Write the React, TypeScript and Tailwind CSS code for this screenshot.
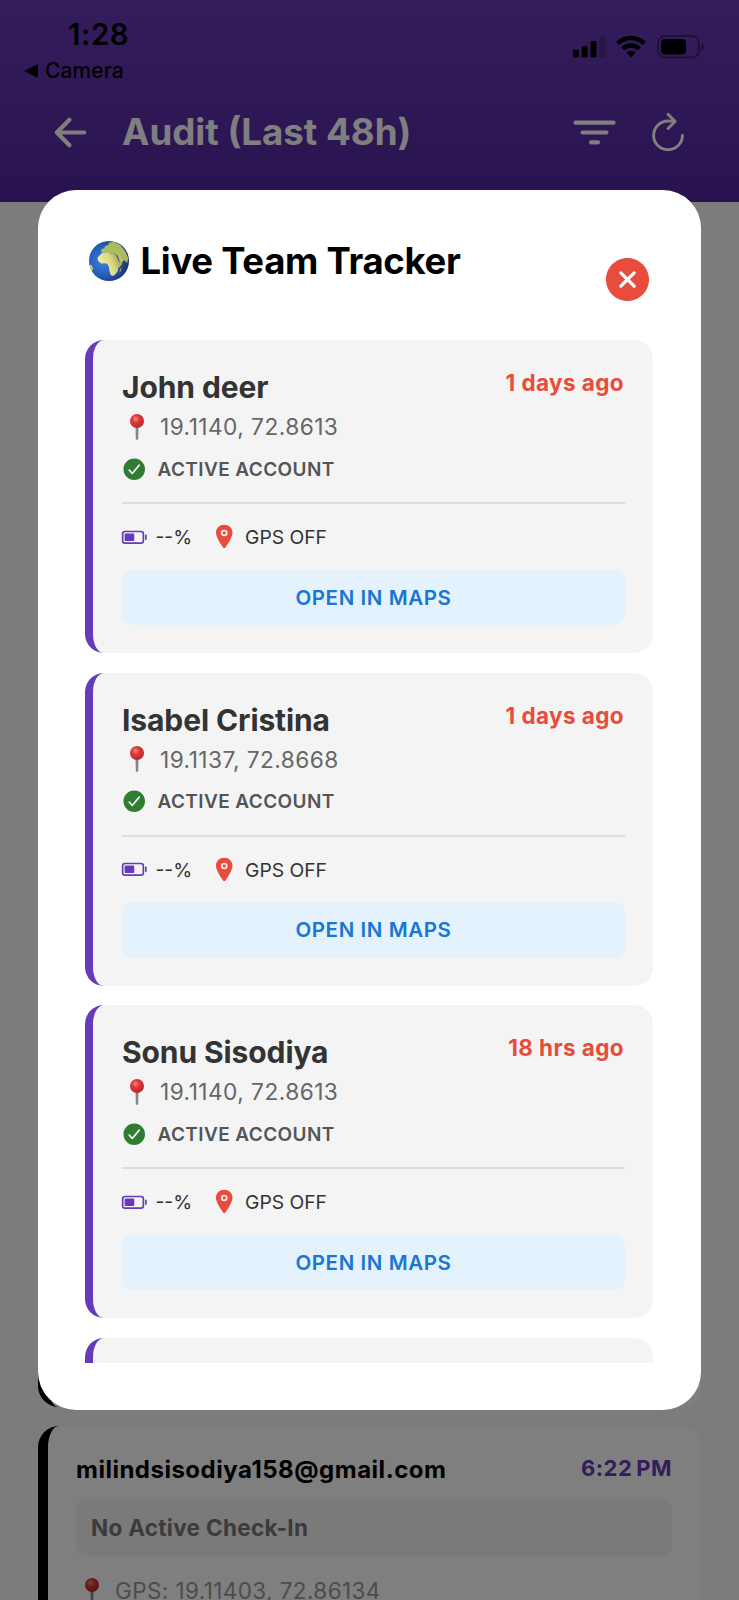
import {
  IoArrowBack,
  IoBatteryHalf,
  IoCheckmarkCircle,
  IoCloseCircle,
  IoFilter,
  IoLocation,
  IoRefreshOutline,
} from "react-icons/io5";

const MEMBERS = [
  { name: "John deer", seen: "1 days ago", coords: "19.1140, 72.8613" },
  { name: "Isabel Cristina", seen: "1 days ago", coords: "19.1137, 72.8668" },
  { name: "Sonu Sisodiya", seen: "18 hrs ago", coords: "19.1140, 72.8613" },
];

function Globe() {
  return (
    <svg viewBox="0 0 40 40" className="w-10 h-10 shrink-0">
      <defs>
        <radialGradient id="ocean" cx="0.35" cy="0.5" r="0.66">
          <stop offset="0" stopColor="#3a83e0" />
          <stop offset="0.6" stopColor="#2459b8" />
          <stop offset="1" stopColor="#1a2d5c" />
        </radialGradient>
        <linearGradient id="land" x1="0.2" y1="0.6" x2="1" y2="0.3">
          <stop offset="0" stopColor="#f0e9a8" />
          <stop offset="0.5" stopColor="#d9d680" />
          <stop offset="1" stopColor="#8f9440" />
        </linearGradient>
        <clipPath id="disc">
          <circle cx="20" cy="20" r="20" />
        </clipPath>
      </defs>
      <circle cx="20" cy="20" r="20" fill="url(#ocean)" />
      <g clipPath="url(#disc)">
        {/* Europe and Asia */}
        <path
          d="M12 10.5l.6-2.6 2.6-.6 1-2.4 3-1 1-2.4 5-.6 6 3 5 6 3 7-1 5-2.4-2-2-4-2.4-1.6-2 .4-3-1.4-3 .8-1.6-1.6-2 .6-1.6-2-2.4.4-1.6.8z"
          fill="#a9bd5c"
        />
        <path d="M28.5 13.6l3.4.4 3.4 4.6-2.4 3-1.8.4z" fill="#c2bd68" />
        {/* Africa */}
        <path
          d="M12.4 12.6l3.6-1.2 3.6-.2.8 1.6 3 .8 3.6.2 1.4 3.4 2 4 3.2.2-1 2.6-3.4 3.2-.4 3-2.6 3.4-2.6 1.4-2-1.2-1.4-4.8-.4-3.2-1.6-3-2.6-.6-3.6.2-3-2.6-.4-3.2z"
          fill="url(#land)"
        />
        <path d="M0 23.5l2.6.6 1.6 3.6-1.6 3.6-2.6-2z" fill="#c9c56a" />
        <path d="M31.2 27.6l1-.8-.4 3.6-1.4 1z" fill="#a9a850" />
      </g>
    </svg>
  );
}

function PushPin({ className }: { className?: string }) {
  return (
    <svg viewBox="0 0 14 26" className={className}>
      <defs>
        <radialGradient id="pinhead" cx="0.4" cy="0.35" r="0.65">
          <stop offset="0" stopColor="#f58a84" />
          <stop offset="0.4" stopColor="#dd3a38" />
          <stop offset="1" stopColor="#b8282a" />
        </radialGradient>
      </defs>
      <path d="M5.5 12h3l-.3 13.2q-1.2 1-2.4 0z" fill="#858588" />
      <circle cx="7" cy="7" r="7" fill="url(#pinhead)" />
    </svg>
  );
}

function StatusIcons() {
  return (
    <svg viewBox="0 0 132 24" className="w-[132px] h-6">
      <rect x="0" y="14.5" width="6" height="8" rx="1.5" />
      <rect x="8.7" y="11" width="6" height="11.5" rx="1.5" />
      <rect x="17.5" y="6" width="6" height="16.5" rx="1.5" />
      <rect x="26.3" y="1" width="6" height="21.5" rx="1.5" opacity="0.2" />
      <g fill="none" stroke="#000" strokeWidth="4.4">
        <path d="M44.7 8.4a19 19 0 0 1 26.6 0" />
        <path d="M49.7 13.8a12 12 0 0 1 16.6 0" />
      </g>
      <path d="M58 22.2l-4.6-4.6a6.6 6.6 0 0 1 9.2 0z" />
      <rect x="85" y="1" width="41" height="21.5" rx="7" fill="none" stroke="#000" strokeWidth="1.8" opacity="0.4" />
      <rect x="88" y="4" width="25" height="15.5" rx="4" />
      <path d="M128.5 8q2.6 1 2.6 3.7t-2.6 3.7z" opacity="0.4" />
    </svg>
  );
}

function MemberCard({ name, seen, coords }: { name: string; seen: string; coords: string }) {
  return (
    <div className="h-[313px] shrink-0 rounded-[19px] border-l-8 border-[#673ab7] bg-[#f4f4f4] pt-7 pl-[29px] pr-7">
      <div className="flex h-[38px] justify-between">
        <h3 className="text-[30px] leading-[38px] font-bold tracking-[-0.1px] text-[#333]">{name}</h3>
        <span className="text-[22.5px] leading-[29px] mr-px font-bold tracking-[0.4px] text-[#e74c3c]">{seen}</span>
      </div>
      <div className="flex h-[41px] items-center">
        <PushPin className="ml-2 w-[14px] h-[26px]" />
        <span className="mt-[2px] ml-4 text-[22.7px] tracking-[0.45px] text-[#666]">{coords}</span>
      </div>
      <div className="flex h-11 items-center">
        <IoCheckmarkCircle className="-ml-px size-[26.5px] text-[#2e7d32]" />
        <span className="mt-[2px] ml-[10px] text-[19px] font-semibold tracking-[0.4px] text-[#555]">ACTIVE ACCOUNT</span>
      </div>
      <div className="mt-[11px] border-t-2 border-[#ddd]" />
      <div className="flex h-[65.5px] items-center text-[19.3px] text-[#333]">
        <IoBatteryHalf className="-ml-px size-[26.5px] text-[#673ab7]" />
        <span className="mt-[2px] ml-2 w-[55px]">--%</span>
        <IoLocation className="-mt-px size-[26.5px] text-[#e74c3c]" />
        <span className="mt-[2px] ml-2">GPS OFF</span>
      </div>
      <button className="block h-[55.5px] w-full rounded-[10px] bg-[#e3f2fd] pt-[2px] text-[20.5px] font-semibold tracking-[0.6px] text-[#1976d2]">
        OPEN IN MAPS
      </button>
    </div>
  );
}

export default function App() {
  return (
    <div className="relative flex h-[1600px] w-[739px] flex-col overflow-hidden bg-[#f6f8fc] font-[Inter,sans-serif]">
      {/* Header */}
      <header className="h-[202px] shrink-0 bg-linear-to-b from-[#6a3ab8] to-[#5026a0]">
        <div className="flex h-[98px] justify-between pr-[34px] pl-6">
          <div className="text-black">
            <p className="mt-4 ml-[44px] text-[29.5px] leading-[36px] font-semibold tracking-[0.5px]">1:28</p>
            <div className="-mt-px flex h-10 items-center gap-[7px]">
              <svg viewBox="0 0 14 14" className="size-[14px]">
                <path d="M0 7L13 0.5Q14 0.5 14 1.5V12.5Q14 13.5 13 13.5Z" />
              </svg>
              <span className="text-[21px] font-medium tracking-[0.1px]">Camera</span>
            </div>
          </div>
          <div className="mt-[35px]">
            <StatusIcons />
          </div>
        </div>
        <div className="flex h-[68px] items-center pl-12 text-white">
          <IoArrowBack className="size-[45px]" />
          <h1 className="ml-[29px] w-[450px] text-[36.7px] font-bold">Audit (Last 48h)</h1>
          <IoFilter className="size-[45px]" />
          <IoRefreshOutline className="ml-7 size-[46px]" />
        </div>
      </header>

      {/* Audit log */}
      <main className="flex flex-1 flex-col gap-[19px] px-[38px] pt-10">
        <div className="h-[1165px] shrink-0 rounded-[21px] border-l-[10px] border-black bg-white" />
        <div className="h-[320px] shrink-0 rounded-[21px] border-l-[10px] border-black bg-white pt-[27px] pr-[29px] pl-7">
          <div className="flex h-[46px] justify-between">
            <span className="text-[24px] leading-[34px] font-bold tracking-[0.5px] text-black">milindsisodiya158@gmail.com</span>
            <span className="text-[22px] leading-[31px] font-bold tracking-[0.5px] text-[#673ab7]">{"6:22\u202fPM"}</span>
          </div>
          <div className="flex h-[57px] items-center rounded-[10px] bg-[#f4f4f4] pt-px pl-[15px] text-[22.5px] font-bold tracking-[0.3px] text-[#777]">
            No Active Check-In
          </div>
          <div className="mt-[15px] flex h-10 items-center">
            <PushPin className="ml-[9px] w-[14px] h-[26px]" />
            <span className="ml-4 text-[22.5px] leading-[18px] tracking-[0.4px] text-[#999]">GPS: 19.11403, 72.86134</span>
          </div>
        </div>
      </main>

      {/* Tracker modal */}
      <div className="absolute inset-0 bg-black/50 px-[38px] pt-[190px]">
        <section className="h-[1220px] rounded-[38px] bg-white pt-[47px] pr-12 pl-[47px]">
          <div className="flex h-[103px] items-start justify-between">
            <div className="flex h-12 items-center">
              <span className="ml-[3.5px]">
                <Globe />
              </span>
              <h2 className="ml-3 text-[36.5px] font-bold tracking-[-0.3px] text-black">Live Team Tracker</h2>
            </div>
            <IoCloseCircle className="mt-4 -mr-px size-[53px] text-[#e74c3c]" />
          </div>
          <div className="flex h-[1022.5px] flex-col gap-[19.5px] overflow-hidden">
            {MEMBERS.map((m) => (
              <MemberCard key={m.name} {...m} />
            ))}
            <div className="h-[313px] shrink-0 rounded-[19px] border-l-8 border-[#673ab7] bg-[#f4f4f4]" />
          </div>
        </section>
      </div>
    </div>
  );
}
